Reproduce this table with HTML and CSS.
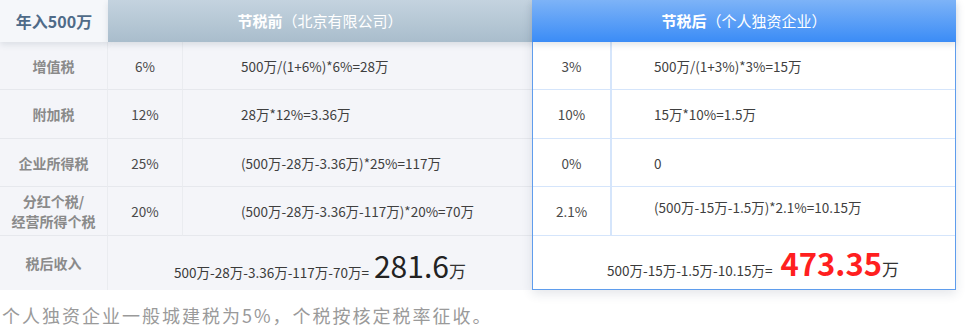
FILE: index.html
```html
<!DOCTYPE html>
<html lang="zh-CN">
<head>
<meta charset="utf-8">
<title>节税对比</title>
<link rel="stylesheet" href="styles.css">
</head>
<body>
<div class="compare">
  <section class="side before">
    <div class="cell head-label">年入500万</div>
    <div class="cell head-title head-gray">节税前<span class="sub">（北京有限公司）</span></div>

    <div class="cell label">增值税</div>
    <div class="cell rate">6%</div>
    <div class="cell formula">500万/(1+6%)*6%=28万</div>

    <div class="cell label">附加税</div>
    <div class="cell rate">12%</div>
    <div class="cell formula">28万*12%=3.36万</div>

    <div class="cell label">企业所得税</div>
    <div class="cell rate">25%</div>
    <div class="cell formula">(500万-28万-3.36万)*25%=117万</div>

    <div class="cell label two-line"><span>分红个税/</span><span>经营所得个税</span></div>
    <div class="cell rate">20%</div>
    <div class="cell formula">(500万-28万-3.36万-117万)*20%=70万</div>

    <div class="cell label last">税后收入</div>
    <div class="cell total last">
      <span class="expr">500万-28万-3.36万-117万-70万=</span>
      <span class="big">281.6</span><span class="unit">万</span>
    </div>
  </section>

  <section class="side after">
    <div class="cell head-title head-blue">节税后<span class="sub">（个人独资企业）</span></div>

    <div class="cell rate">3%</div>
    <div class="cell formula">500万/(1+3%)*3%=15万</div>

    <div class="cell rate">10%</div>
    <div class="cell formula">15万*10%=1.5万</div>

    <div class="cell rate">0%</div>
    <div class="cell formula">0</div>

    <div class="cell rate">2.1%</div>
    <div class="cell formula raised">(500万-15万-1.5万)*2.1%=10.15万</div>

    <div class="cell total last">
      <span class="expr">500万-15万-1.5万-10.15万=</span>
      <span class="big red">473.35</span><span class="unit">万</span>
    </div>
  </section>
</div>
<p class="note">个人独资企业一般城建税为5%，个税按核定税率征收。</p>
</body>
</html>
```

FILE: styles.css
```css
* {
  box-sizing: border-box;
}

html, body {
  margin: 0;
  padding: 0;
  background: #ffffff;
}

body {
  width: 965px;
  height: 329px;
  overflow: hidden;
  font-family: "Noto Sans CJK SC", "Noto Sans", sans-serif;
  color: #444;
}

.compare {
  display: flex;
  align-items: flex-start;
  width: 957px;
}

.side {
  display: grid;
  grid-template-rows: 42px 48px 49px 48px 49px 54px;
}

.before {
  width: 532px;
  grid-template-columns: 108px 75px 1fr;
  background: #f4f5f9;
}

.after {
  width: 424px;
  grid-template-columns: 79px 1fr;
  grid-template-rows: 42px 48px 49px 48px 49px 53px;
  background: #ffffff;
  border: 1px solid #5f9ded;
  border-top: none;
  box-shadow: 0 4px 10px rgba(40, 60, 90, 0.12);
  position: relative;
  z-index: 1;
}

.cell {
  display: flex;
  align-items: center;
  font-size: 13.5px;
  line-height: 16px;
}

/* headers */
.head-label {
  justify-content: center;
  background: #f5f7fa;
  color: #4f6b88;
  font-size: 16px;
  font-weight: 700;
  box-shadow: 0 3px 6px rgba(60, 80, 100, 0.12);
  position: relative;
  z-index: 1;
}

.head-title {
  grid-column: 2 / 4;
  justify-content: center;
  color: #ffffff;
  font-size: 15px;
  font-weight: 700;
  box-shadow: 0 3px 6px rgba(60, 80, 100, 0.14);
  position: relative;
  z-index: 1;
}

.head-title .sub {
  font-weight: 400;
}

.head-gray {
  background: linear-gradient(to bottom, #c4d3df, #a9bdcc);
}

.head-blue {
  grid-column: 1 / 3;
  margin: 0 -1px;
  background: linear-gradient(to bottom, #7db3f7, #3b8cf6);
}

/* body cells */
.label {
  justify-content: center;
  text-align: center;
  color: #8a8a8a;
  font-size: 14px;
  font-weight: 700;
  line-height: 18px;
  border-bottom: 1px solid #e6e8ed;
  border-right: 1px solid #eaecf0;
}

.label.two-line {
  flex-direction: column;
  line-height: 20px;
}

.rate {
  justify-content: center;
  color: #4a4a4a;
  border-bottom: 1px solid #e6e8ed;
  border-right: 1px solid #eaecf0;
}

.formula {
  color: #3f3f3f;
  padding-left: 58px;
  border-bottom: 1px solid #e6e8ed;
}

.after .rate {
  border-bottom: 1px solid #d5e5fb;
  border-right: 2px solid #d5e5fb;
}

.after .formula {
  padding-left: 42px;
  border-bottom: 1px solid #d5e5fb;
}

.after .formula.raised {
  padding-bottom: 8px;
}

.last {
  border-bottom: none;
}

.total {
  grid-column: 2 / 4;
  justify-content: center;
  align-items: baseline;
  padding-top: 12px;
  color: #3a3a3a;
}

.after .total {
  grid-column: 1 / 3;
  padding-top: 10px;
  padding-left: 18px;
}

.total .expr {
  font-size: 13.5px;
  margin-right: 8px;
}

.before .total .expr {
  margin-right: 5px;
}

.total .big {
  font-size: 30px;
  line-height: 34px;
  color: #222;
}

.total .big.red {
  font-size: 31px;
  color: #ff1f1f;
  font-weight: 700;
}

.total .unit {
  font-size: 17px;
  color: #333;
}

.note {
  margin: 13px 0 0 2px;
  font-size: 18px;
  line-height: 24px;
  letter-spacing: 2px;
  color: #9a9a9a;
}
```
